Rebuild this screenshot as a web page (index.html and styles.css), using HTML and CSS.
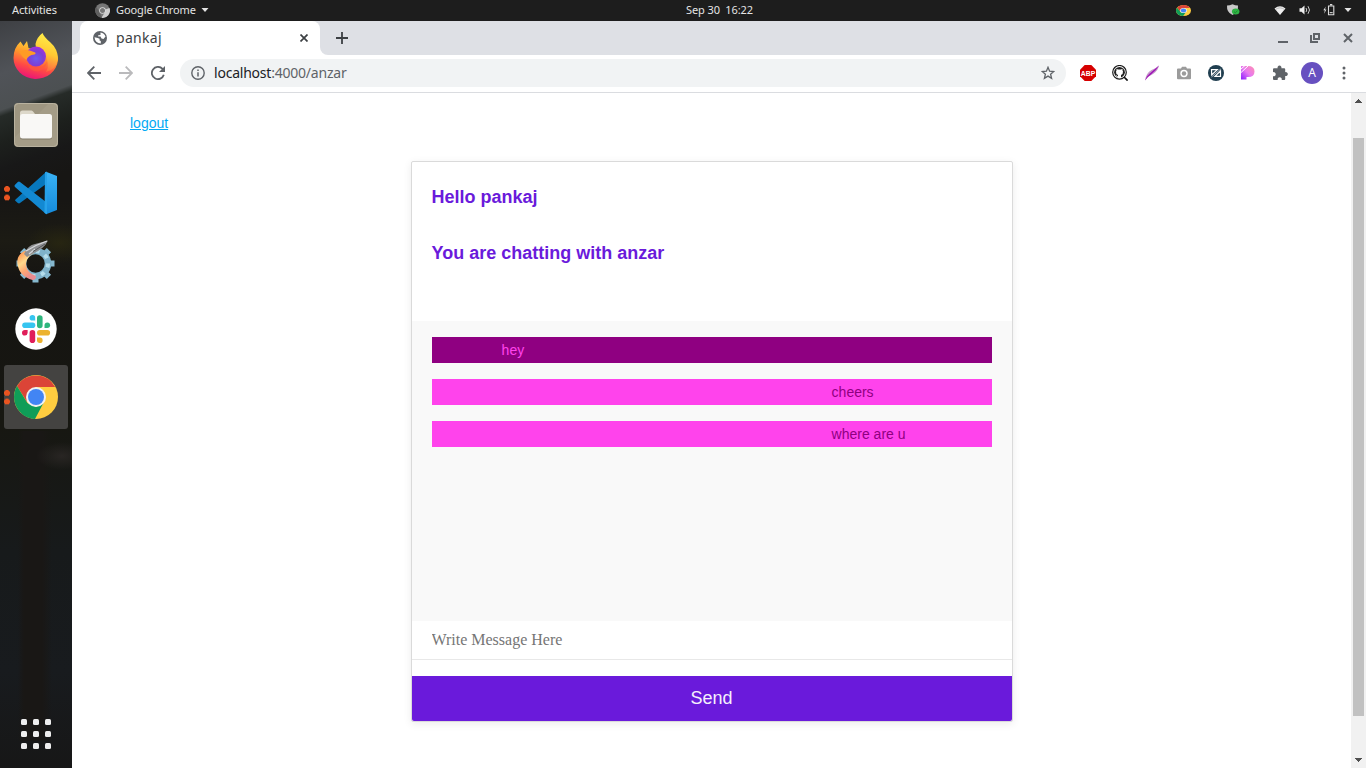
FILE: index.html
```html
<!DOCTYPE html>
<html lang="en">
<head>
<meta charset="utf-8">
<title>pankaj</title>
<link rel="stylesheet" href="styles.css">
</head>
<body>
<svg width="0" height="0" class="defs">
  <defs>
    <linearGradient id="ffBody" x1=".7" y1="0" x2=".35" y2="1"><stop offset="0" stop-color="#ffe83f"/><stop offset=".4" stop-color="#ff9a2b"/><stop offset=".7" stop-color="#ff4a45"/><stop offset="1" stop-color="#e9117b"/></linearGradient>
    <linearGradient id="ffFlame" x1=".5" y1="0" x2=".3" y2="1"><stop offset="0" stop-color="#fff04a"/><stop offset=".5" stop-color="#ffc832"/><stop offset="1" stop-color="#ff5a45"/></linearGradient>
    <radialGradient id="ffGlobe" cx=".5" cy=".6" r=".6"><stop offset="0" stop-color="#6a5cf0"/><stop offset=".6" stop-color="#7c3fd4"/><stop offset="1" stop-color="#a32fe0"/></radialGradient>
    <linearGradient id="codeBlue" x1="0" y1="0" x2="0" y2="1"><stop offset="0" stop-color="#39b2f5"/><stop offset="1" stop-color="#158bdc"/></linearGradient>
    <linearGradient id="gearFire" x1="0" y1="0" x2=".5" y2="1"><stop offset="0" stop-color="#ff7a3c"/><stop offset=".45" stop-color="#ffd98c"/><stop offset=".7" stop-color="#ffa873"/><stop offset="1" stop-color="#e98a90"/></linearGradient>
    <linearGradient id="pink" x1="1" y1="0" x2="0" y2="1"><stop offset="0" stop-color="#ff8fb0"/><stop offset=".5" stop-color="#e879f0"/><stop offset="1" stop-color="#8a1cff"/></linearGradient>
    <symbol id="chrome" viewBox="0 0 44 44">
      <circle cx="22" cy="22" r="22" fill="#ffcd40"/>
      <path d="M3 11A22 22 0 0 1 41.100 12H22L13 27z" fill="#db4437"/>
      <path d="M3 11 13.400 28 22 32l8-5L21 44A22 22 0 0 1 3 11z" fill="#0f9d58"/>
      <circle cx="22" cy="22" r="10" fill="#f1f1f1"/><circle cx="22" cy="22" r="8" fill="#4285f4"/>
    </symbol>
  </defs>
</svg>

<header class="topbar">
  <span class="activities">Activities</span>
  <span class="app">
    <svg width="15" height="15" viewBox="0 0 30 30"><circle cx="15" cy="15" r="14.500" fill="#777"/><path d="M15 15 29 10A14.500 14.500 0 0 1 13 29.500L20 18z" fill="#cfcfcf"/><path d="M2.500 7.500 9 18l5 11.400A14.500 14.500 0 0 1 2.500 7.500z" fill="#606060"/><circle cx="15" cy="15" r="6.500" fill="#ddd"/><circle cx="15" cy="15" r="5" fill="#777"/></svg>
    <span class="app-name">Google Chrome</span>
    <svg width="8" height="4" viewBox="0 0 8 4"><path d="M.5 0h7L4 4z" fill="#e4e4e4"/></svg>
  </span>
  <span class="clock">Sep 30&nbsp; 16:22</span>
  <span class="tray">
    <svg class="t-chrome" width="15" height="11" viewBox="0 0 44 44" preserveAspectRatio="none"><use href="#chrome" width="44" height="44"/></svg>
    <svg class="t-shield" width="14" height="12" viewBox="0 0 14 12"><path d="M1 1.500Q4 1.500 6.500.3 9 1.500 12 1.500 12.500 8.500 6.500 11 .5 8.500 1 1.500z" fill="#c9c9c9"/><ellipse cx="9.700" cy="7.600" rx="3.800" ry="3" fill="#2fb344"/><path d="m8 7.700 1.300 1 2.300-2" stroke="#1d8a30" fill="none"/></svg>
    <svg class="t-wifi" width="12" height="9" viewBox="0 0 12 9"><path d="M.5 2.500Q6-1.800 11.500 2.500L6 9z" fill="#eee"/><path d="M1.500 3.500Q6 .2 10.500 3.500" stroke="#999" stroke-width=".6" fill="none"/></svg>
    <svg class="t-vol" width="12" height="10" viewBox="0 0 12 10"><path d="M.5 3.200h2L5.500.5v9L2.500 6.800h-2z" fill="#eee"/><path d="M7 3q1.500 2 0 4M9 1.200q3 3.800 0 7.600" stroke="#ccc" fill="none"/></svg>
    <svg class="t-bat" width="12" height="12" viewBox="0 0 12 12"><path d="M5.500 2h5.300v8.800H5.500zM7 .6h2.300" stroke="#ddd" stroke-width="1.100" fill="none"/><path d="M6.700 8.700h3" stroke="#eee"/><path d="M2.800 2.500.3 6.300h1.500l-.6 3.400 2.200-4.200H2z" fill="#ddd"/></svg>
    <svg width="8" height="4" viewBox="0 0 8 4"><path d="M.5 0h7L4 4z" fill="#e4e4e4"/></svg>
  </span>
</header>

<div class="desktop">
  <nav class="dock">
    <div class="cell">
      <svg width="46" height="48" viewBox="0 0 46 48">
        <path d="M7.500 8.500 10.500 13 14 8 15.500 15 23 17 32 11 39 14Q45 20 45 27A22.300 21 0 0 1 .5 25Q.5 15 7.500 8.500z" fill="url(#ffBody)"/>
        <path d="M29.500 0Q31 4 37 9 45 16 45 26 43 37 33 39 38 31 31 20 22 17 22.500 11 24 4 29.500 0z" fill="url(#ffFlame)"/>
        <circle cx="23" cy="23.500" r="10" fill="url(#ffGlobe)"/>
        <path d="M6 19Q12 15 21 19 24 20 21.500 21.500 15 22 13.500 27 9 24 6 19z" fill="#ff9b25"/>
        <path d="M13 26q3 9 11 8.500 7 0 10-6-1 8-9 10-10 0-12-12.500z" fill="#ff5a3c" opacity=".6"/>
      </svg>
    </div>
    <div class="cell">
      <svg width="46" height="46" viewBox="0 0 46 46"><rect x="1" y="1" width="44" height="44" rx="4" fill="#9e9681"/><path d="M2 35 35 2h9v42H2z" fill="#aaa28e" opacity=".5"/><rect x="1.500" y="1.500" width="43" height="43" rx="4" fill="none" stroke="#b9b29f"/><path d="M7 13V11q0-2.500 2.500-2.500h9q1 0 2 1.500l1.500 2v5H7z" fill="#ddd8ca"/><rect x="7" y="13" width="32" height="24.500" rx="2.500" fill="#817a69"/><rect x="7" y="12" width="32" height="24.500" rx="2.500" fill="#f9f8f6"/></svg>
    </div>
    <div class="cell running">
      <svg width="44" height="44" viewBox="0 0 44 44"><path d="M1.500 28.500 32 1v12L6 32q-1 1-2.500-.3L1 29.500z" fill="#0878bd"/><path d="m.8 14 3-3Q5 10 6 11l26 20v12L1 16q-1-1-.2-2z" fill="#1389d2"/><path d="M32 .8 43 5v34l-11 4.200z" fill="url(#codeBlue)"/><path d="m31 1 2-.2v42.400L30.500 42z" fill="#26a1e9"/></svg>
    </div>
    <div class="cell">
      <svg width="44" height="46" viewBox="0 0 44 46">
        <g transform="translate(21.500 25.500)">
          <g fill="#86b8cf"><path d="M-3-17h6v-1.500h-6zM-3 15h6v4h-6z"/><path d="M-3-19h6v5h-6zM-3 14h6v5h-6z" transform="rotate(45)"/><path d="M-3-19h6v5h-6zM-3 14h6v5h-6z" transform="rotate(90)"/><path d="M-3-19h6v5h-6zM-3 14h6v5h-6z" transform="rotate(135)"/></g>
          <circle r="12.500" fill="none" stroke="#7fb2ca" stroke-width="6.500"/><circle r="12.500" fill="none" stroke="#b4dcea" stroke-width="4" stroke-dasharray="4 5.800"/>
        </g>
        <path d="M13 12Q2 16 3.500 26 5 38 18.500 42 22 42 22 38 13 35 12 27 12 19 20 15z" fill="url(#gearFire)"/>
        <path d="M10 16Q14 7 21 6L34 2.500Q30 11 19 15.500L13 19z" fill="#8f9092"/><path d="M12 13 22 7.500 33 3M15 16l6-5" stroke="#d5d7d9" stroke-width="1.300" fill="none"/><path d="M19 13.500 31 6" stroke="#55585a"/>
      </svg>
    </div>
    <div class="cell">
      <svg width="42" height="42" viewBox="0 0 42 42"><circle cx="21" cy="21" r="20.700" fill="#fff"/>
        <g stroke-width="5.600" stroke-linecap="round"><path d="M10 17.200h7.500" stroke="#36c5f0"/><path d="M24.800 10v7.500" stroke="#2eb67d"/><path d="M24.800 24.800h7.500" stroke="#ecb22e"/><path d="M17.400 24.800v7.500" stroke="#e01e5a"/></g>
        <path d="M20.200 12.600h-3a2.800 2.800 0 1 1 3-2.800z" fill="#36c5f0"/><path d="M29.500 20V17a2.800 2.800 0 1 1 2.800 3z" fill="#2eb67d"/><path d="M22 29.500h3a2.800 2.800 0 1 1-3 2.800z" fill="#ecb22e"/><path d="M12.600 22v3a2.800 2.800 0 1 1-2.800-3z" fill="#e01e5a"/>
      </svg>
    </div>
    <div class="cell running active"><svg width="44" height="44"><use href="#chrome" width="44" height="44"/></svg></div>
    <div class="apps"><i></i><i></i><i></i><i></i><i></i><i></i><i></i><i></i><i></i></div>
  </nav>

  <section class="window">
    <div class="tabstrip">
      <div class="edge"></div>
      <div class="tab">
        <svg width="14" height="14" viewBox="0 0 14 14"><circle cx="7" cy="7" r="7" fill="#5f6368"/><path d="M1.500 6.200 4.800 7l1.800.8V9.500L7.800 10v2.500Q2 12 1.500 6.200zM5.200 5.500V4.200L7.500 4V1.600q3.800.4 5 4L10.500 8 8.500 7.500 7.500 5.500z" fill="#fff"/></svg>
        <span class="tab-title">pankaj</span>
        <svg class="close" width="8" height="8" viewBox="0 0 8 8"><path d="m.5.5 7 7m0-7-7 7" stroke="#3c4043" stroke-width="1.700"/></svg>
      </div>
      <div class="after-tab"><svg width="12" height="12" viewBox="0 0 12 12"><path d="M6 0v12M0 6h12" stroke="#3c4043" stroke-width="1.800"/></svg></div>
      <div class="controls">
        <svg width="10" height="10" viewBox="0 0 10 10"><path d="M0 9h10" stroke="#5f6368" stroke-width="2"/></svg>
        <svg width="10" height="10" viewBox="0 0 10 10"><path d="M4 1h5v5H4zM1 2v7h7" fill="none" stroke="#5f6368" stroke-width="2"/></svg>
        <svg width="10" height="10" viewBox="0 0 10 10"><path d="m1 1 8 8m0-8L1 9" stroke="#5f6368" stroke-width="2"/></svg>
      </div>
    </div>

    <div class="toolbar">
      <div class="nav">
        <svg width="14" height="14" viewBox="0 0 14 14"><path d="M14 7H1.500M7.300.7 1 7l6.300 6.300" fill="none" stroke="#5f6368" stroke-width="1.800"/></svg>
        <svg width="14" height="14" viewBox="0 0 14 14"><path d="M0 7h12.500M6.700.7 13 7l-6.300 6.300" fill="none" stroke="#bababc" stroke-width="1.800"/></svg>
        <svg width="14" height="14" viewBox="0 0 14 14"><path d="M12.800 8.700A6.100 6.100 0 1 1 11.300 2.700L12 3.500" fill="none" stroke="#5f6368" stroke-width="1.800"/><path d="M14 0v6H8z" fill="#5f6368"/></svg>
      </div>
      <div class="omnibox">
        <svg width="14" height="14" viewBox="0 0 14 14"><circle cx="7" cy="7" r="6.200" fill="none" stroke="#5f6368" stroke-width="1.400"/><path d="M7 6.200v4.300M7 3.500v1.500" stroke="#5f6368" stroke-width="1.500"/></svg>
        <span class="url"><b>localhost</b>:4000/anzar</span>
        <svg class="star" width="14" height="14" viewBox="0 0 14 14"><path d="m7 1.300 1.600 3.900 4.200.3-3.200 2.700 1 4.100L7 10.100l-3.600 2.200 1-4.100L1.200 5.500l4.200-.3z" fill="none" stroke="#5f6368" stroke-width="1.300"/></svg>
      </div>
      <div class="extensions">
        <svg width="16" height="16" viewBox="0 0 16 16"><path d="M4.700 0h6.600L16 4.700v6.600L11.300 16H4.700L0 11.300V4.700z" fill="#d60000"/><text x=".8" y="10.900" class="abp" textLength="14.400" lengthAdjust="spacingAndGlyphs">ABP</text></svg>
        <svg width="16" height="16" viewBox="0 0 16 16"><circle cx="7.500" cy="7.300" r="6.800" fill="#fff" stroke="#1b1b1b" stroke-width="1.200"/><circle cx="7.500" cy="7.300" r="5.400" fill="#222"/><path d="m12 12 3.600 3.600" stroke="#111" stroke-width="1.700"/><path d="M6 13v-3Q3.700 9.200 4 6.600L4.500 5.500V3.800L6 4.500h3l1.500-.7v1.700L11 6.600Q11.300 9.200 9 10v3z" fill="#fff"/><path d="M4 10.500 6 11.800" stroke="#fff" stroke-width=".8"/></svg>
        <svg width="16" height="16" viewBox="0 0 16 16"><path d="M1 15.500Q2 8 7.500 5 12.500 3 15 .5 14 6 9 9 4 11 1 15.500z" fill="#c59acb"/><path d="M1 15.500Q3 10 8 6.500L15 .5Q12 6 7.500 9 4 11.500 1 15.500z" fill="#a014b8"/></svg>
        <svg width="16" height="16" viewBox="0 0 16 16"><path d="M2 3.500h3L6 1.700h4l1 1.800h3q1 0 1 1v8.700q0 1-1 1H2q-1 0-1-1V4.500q0-1 1-1z" fill="#9b9b9b"/><circle cx="8" cy="8.500" r="3.700" fill="#fff"/><circle cx="8" cy="8.500" r="2.200" fill="#9b9b9b"/></svg>
        <svg width="16" height="16" viewBox="0 0 16 16"><circle cx="8" cy="8" r="8" fill="#213f50"/><path d="M3.500 4.600h5.800L3.700 10zM12.500 6v5.400H7z" fill="none" stroke="#fff" stroke-width="1.200"/><path d="M3.500 12 13 3.800" stroke="#c8d2d8" stroke-width=".8"/></svg>
        <svg width="16" height="16" viewBox="0 0 16 16"><path d="M1 1h7Q14.500 1 14.500 6.500T8 12H6.500v2.500H1z" fill="url(#pink)"/><path d="M.5 4.500 5 .5M.5 8 8 1" stroke="#fff" stroke-width="1"/></svg>
        <svg width="16" height="16" viewBox="0 0 16 16"><path d="M2 3.200h3.600a2 2 0 1 1 3.800 0h2.800q1 0 1 1v3a2 2 0 1 1 0 3.800v3q0 1-1 1H9.700a2.100 2.100 0 1 0-4 0H2q-1 0-1-1v-2.800a2.100 2.100 0 1 0 0-4V4.200q0-1 1-1z" fill="#5f6368"/></svg>
      </div>
      <span class="avatar">A</span>
      <svg class="menu" width="4" height="14" viewBox="0 0 4 14"><g fill="#5f6368"><circle cx="2" cy="2" r="1.500"/><circle cx="2" cy="7" r="1.500"/><circle cx="2" cy="12" r="1.500"/></g></svg>
    </div>

    <div class="viewport">
      <main class="page">
        <a class="logout" href="#">logout</a>
        <div class="chat">
          <div class="chat-head"><h1>Hello pankaj</h1><h1>You are chatting with anzar</h1></div>
          <div class="messages">
            <p class="msg sent">hey</p>
            <p class="msg received">cheers</p>
            <p class="msg received">where are u</p>
          </div>
          <input class="compose" type="text" placeholder="Write Message Here">
          <button class="send">Send</button>
        </div>
      </main>
      <div class="scrollbar">
        <svg width="7" height="4" viewBox="0 0 7 4" shape-rendering="crispEdges"><path d="M0 4h7V3H6V2H5V1H4V0H3v1H2v1H1v1H0z" fill="#505050"/></svg>
        <div class="thumb"></div>
        <svg width="7" height="4" viewBox="0 0 7 4" shape-rendering="crispEdges"><path d="M0 0h7v1H6v1H5v1H4v1H3V3H2V2H1V1H0z" fill="#505050"/></svg>
      </div>
    </div>
  </section>
</div>
</body>
</html>
```
FILE: styles.css
```css
* { box-sizing: border-box; }
body { margin: 0; width: 1366px; height: 768px; overflow: hidden; display: flex; flex-direction: column; background: #fff; font-family: "Liberation Sans", sans-serif; }
svg { display: block; flex: none; }
.defs { position: absolute; }

.topbar { height: 21px; flex: none; display: grid; grid-template-columns: 95px 591px 1fr auto; align-items: center; background: #1d1d1d; color: #e4e4e4; font: 11px/18px "Noto Sans", sans-serif; white-space: nowrap; padding-bottom: 1px; }
.activities { padding-left: 12px; letter-spacing: 0.2px; }
.activities, .app-name, .clock { margin-top: -1px; }
.activities { letter-spacing: 0.2px; }
.app { display: flex; align-items: center; }
.app-name { margin-left: 6px; margin-right: 5px; letter-spacing: -0.1px; }
.activities { letter-spacing: -0.1px; }
.clock { letter-spacing: -0.1px; }
.tray { display: flex; align-items: center; padding-right: 14px; }
.t-chrome { margin-right: 35px; }
.t-shield { margin-right: 34px; }
.t-wifi { margin-right: 13px; }
.t-vol { margin-right: 12px; }
.t-bat { margin-right: 9px; }

.desktop { flex: 1; min-height: 0; display: flex; }
.dock { width: 72px; flex: none; display: flex; flex-direction: column; gap: 4px; padding: 4px 4px 19px;
  background:
    radial-gradient(ellipse 34px 20px at 60px 222px, rgba(46, 44, 16, 0.6) 0, transparent 100%),
    radial-gradient(ellipse 26px 14px at 62px 435px, rgba(48, 43, 42, 0.7) 0, transparent 100%),
    linear-gradient(90deg, transparent 18px, #191715 24px, #191715 42px, transparent 52px) 0 410px / 72px 310px no-repeat,
    linear-gradient(160deg, #3e4044 0, #505358 50px, #4c5052 84px, #262b28 90px, #1d201d 115px, #181818 140px, transparent 165px),
    linear-gradient(#171614 0, #171614 180px, #1c1b14 220px, #151412 260px, #171711 400px, #171a1b 530px, #181b1e 650px, #171717); }
.cell { position: relative; width: 64px; height: 64px; flex: none; display: grid; place-items: center; border-radius: 3px; }
.active { background: #444341; }
.running::before { content: ""; position: absolute; left: 0; top: 25px; width: 6px; height: 15px; background: radial-gradient(circle at 3px 3px, #e95420 2.700px, transparent 3.200px) 0 0 / 6px 8.600px; }
.apps { margin: auto auto 0; display: grid; grid-template-columns: repeat(3, 6px); gap: 6px; }
.apps i { width: 6px; height: 6px; border-radius: 1.500px; background: #eee; }

.window { flex: 1; min-width: 0; display: flex; flex-direction: column; }
.tabstrip { height: 34px; flex: none; display: flex; background: #fff; }
.edge { width: 8px; background: #dee0e5; border-bottom-right-radius: 8px; }
.tab { width: 240px; display: flex; align-items: center; padding: 0 12px 0 13px; background: linear-gradient(#dee0e5, #dee0e5) 0 0 / 100% 10px no-repeat; position: relative; isolation: isolate; }
.tab::before { content: ""; position: absolute; z-index: -1; inset: 0; border-radius: 8px 8px 0 0; background: #fff; }
.tab-title { margin-left: 9px; font: 14px/20px "Noto Sans", sans-serif; color: #3c4043; letter-spacing: 0.3px; }
.close { margin-left: auto; }
.after-tab { flex: 1; background: #dee0e5; border-bottom-left-radius: 8px; padding: 11px 0 0 16px; }
.controls { display: flex; gap: 22px; align-items: center; padding-right: 13px; margin-right: 0; background: #dee0e5; }
.controls svg:first-child, .controls svg:nth-child(2) { margin-left: -1px; margin-right: 1px; }

.toolbar { height: 38px; flex: none; display: flex; align-items: center; padding: 0 20px 1px 15px; border-bottom: 1px solid #dadce0; background: #fff; }
.nav { display: flex; gap: 18px; margin-right: 15px; }
.omnibox { width: 886px; height: 28px; border-radius: 14px; display: flex; align-items: center; background: #f1f3f4; padding: 0 11px; }
.url { margin-left: 9px; font: 14px/20px "Noto Sans", sans-serif; letter-spacing: -0.22px; color: #5f6368; }
.url b { font-weight: 400; color: #202124; }
.star { margin-left: auto; }
.extensions { display: flex; gap: 16px; margin-left: 14px; }
.abp { font: bold 8px "Liberation Sans", sans-serif; fill: #fff; }
.avatar { width: 22px; height: 22px; margin-left: 13px; border-radius: 50%; background: #6750c0; color: #fff; font: 12px/22px "Noto Sans", sans-serif; text-align: center; }
.menu { margin-left: auto; }

.viewport { flex: 1; min-height: 0; display: flex; }
.page { flex: 1; padding: 22px 0 0 58px; }
.logout { display: block; width: max-content; font-size: 14px; line-height: 16px; color: #03a9f4; text-decoration: underline; }
.chat { width: 602px; height: 561px; margin: 30px 0 0 281px; border: 1px solid #dadada; border-radius: 2px; box-shadow: 0 2px 8px rgba(0, 0, 0, 0.08); display: flex; flex-direction: column; background: #fff; }
.chat-head { height: 159px; padding: 24px 19.500px 0; }
.chat-head h1 { margin: 0 0 34px; font-size: 18px; line-height: 22px; font-weight: 700; color: #6a1adb; }
.messages { height: 300px; padding: 16px 20px; display: flex; flex-direction: column; gap: 16px; background: #f9f9f9; }
.msg { margin: 0; height: 26px; font-size: 14px; line-height: 26px; }
.sent { padding-left: 69.600px; background: #8f0081; color: #ff43ec; }
.received { padding-left: 399.600px; background: #ff43ec; color: #8f0081; }
.compose { height: 39px; padding: 0 19.500px 1px; margin: 0 0 16px; border: 0; border-bottom: 1px solid #e8e8e8; background: #fff; font: 16px "Liberation Serif", serif; }
.send { height: 45px; border: 0; padding: 0 1px 0 0; background: #6a1adb; color: #f5f0fc; font: 18px "Liberation Sans", sans-serif; border-radius: 0 0 2px 2px; }

.scrollbar { width: 15px; display: flex; flex-direction: column; align-items: center; padding: 6px 0 6px; background: #f1f1f1; }
.thumb { width: 11px; height: 578px; margin: 35px 0 auto; background: #c1c1c1; }
```
